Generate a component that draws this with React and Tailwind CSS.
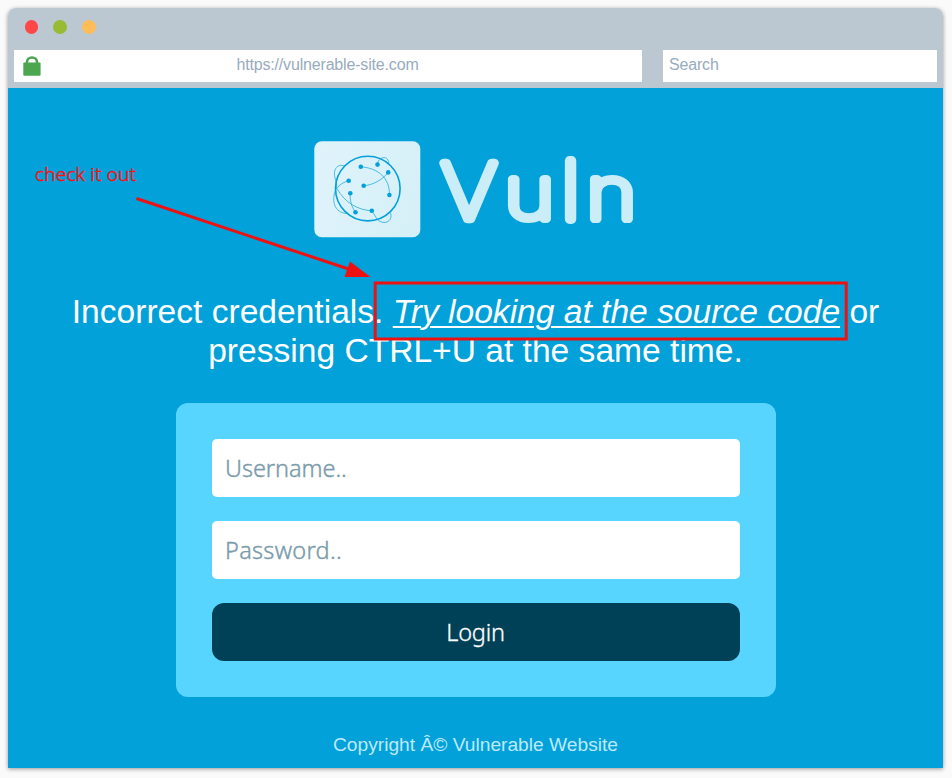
const LETTERS = [
  { char: 'V', x: 469, sx: 1.13, sy: 0.99 },
  { char: 'u', x: 529.5, sx: 1.11, sy: 0.94 },
  { char: 'l', x: 570.5, sx: 1, sy: 1.03 },
  { char: 'n', x: 611.5, sx: 1.11, sy: 0.95 },
];

function Logo() {
  return (
    <svg className="mr-[-13px] block shrink-0" width="336" height="98" viewBox="314 140 336 98" role="img" aria-label="Vuln">
      <defs>
        <linearGradient id="pale" gradientUnits="userSpaceOnUse" x1="314" y1="150" x2="634" y2="230">
          <stop offset="0" stopColor="#e0f3fa" />
          <stop offset="1" stopColor="#c2eaf5" />
        </linearGradient>
      </defs>
      <rect x="314.3" y="141.2" width="106" height="96" rx="7.5" fill="url(#pale)" />
      <g fill="none" stroke="#02a1da">
        <circle cx="367.8" cy="188.6" r="32.3" strokeWidth="1.6" />
        <g strokeWidth="0.9" strokeOpacity="0.75">
          <path d="M360.8 166.8C378 168 390 178 389.4 195" />
          <path d="M388.2 172.5C382 180 373 185 363.7 185.8" />
          <path d="M348.7 180.8C344 182 339 184.5 337 188.5" />
          <path d="M337 188.5C345 203 358 210 371.8 210.8" />
          <path d="M350.3 193.2C349.5 200 352 208 355.5 212.2" />
          <path d="M345 166C336 163 332 171 336 181C337 184 337 186 336 189C331 200 334 213 347 213.5" />
          <path d="M377.5 164.5C378 157 387 155 388.6 161.5L388.8 164" />
          <path d="M371.8 210.8C375 215 376 219 380 221.5C387 225 393 219 390.5 213" />
        </g>
      </g>
      <g fill="#02a1da">
        <circle cx="360.8" cy="166.8" r="2.3" />
        <circle cx="377.5" cy="164.6" r="2.3" />
        <circle cx="388.2" cy="172.4" r="2.3" />
        <circle cx="348.7" cy="180.8" r="2.3" />
        <circle cx="363.7" cy="185.8" r="2.3" />
        <circle cx="350.3" cy="193.2" r="2.3" />
        <circle cx="389.4" cy="195" r="2.3" />
        <circle cx="371.8" cy="210.8" r="2.3" />
        <circle cx="355.5" cy="212.2" r="2.3" />
      </g>
      <g
        fill="#cbedf7"
        stroke="#cbedf7"
        strokeLinejoin="round"
        fontFamily="Inter, sans-serif"
        fontWeight="100"
        fontSize="77"
        textAnchor="middle"
      >
        {LETTERS.map((l) => (
          <text
            key={l.char}
            transform={`translate(${l.x} 219.1) scale(${l.sx} ${l.sy})`}
            strokeWidth={9.6 / l.sx}
          >
            {l.char}
          </text>
        ))}
      </g>
    </svg>
  );
}

function Lock() {
  return (
    <svg className="block" width="18" height="20" viewBox="0 0 18 20">
      <path d="M4 8V6a5 4.500 0 0 1 10 0V8" fill="none" stroke="#4ca650" strokeWidth="2.600" />
      <rect x="0.300" y="6.600" width="17.300" height="13.100" rx="1" fill="#4ca650" />
    </svg>
  );
}

function BrowserBar() {
  return (
    <header className="h-[80px] rounded-t-[8px] bg-[#bbc7d1] px-[6px] pt-[12px] font-['Liberation_Sans',sans-serif] text-[16px] tracking-[-0.17px] text-[#98abbe]">
      <div className="flex h-[14px] gap-[15px] pl-[11px]">
        <span className="h-[14px] w-[13px] rounded-full bg-[#ff4747]" />
        <span className="size-[14px] rounded-full bg-[#99bb33]" />
        <span className="size-[14px] rounded-full bg-[#ffbd59]" />
      </div>
      <div className="mt-[16px] flex h-[32px] gap-[21px]">
        <div className="flex w-[628px] bg-white">
          <div className="w-[42px] pl-[9px] pt-[6px]"><Lock /></div>
          <div className="flex-1 pr-[43px] text-center leading-[29px]">https://vulnerable-site.com</div>
        </div>
        <div className="flex-1 bg-white pl-[6px] leading-[29px]">Search</div>
      </div>
    </header>
  );
}

function Annotation() {
  return (
    <svg className="pointer-events-none absolute left-0 top-0" width="952" height="778" viewBox="0 0 952 778">
      <text x="35" y="181" fill="#fa0f0f" stroke="#fa0f0f" strokeWidth="0.5" fontFamily="'Noto Sans', sans-serif" fontWeight="300" fontSize="19" textLength="101">
        check it out
      </text>
      <path d="M136.500 198.500L350 269.500" stroke="#ee1111" strokeWidth="3" />
      <path d="M350 261.500L370.500 277L344.500 277Z" fill="#ee1111" />
      <rect x="375.200" y="283" width="471" height="56" fill="none" stroke="#ee1111" strokeWidth="3" />
    </svg>
  );
}

export default function App() {
  return (
    <div className="relative h-[778px] w-[952px] overflow-hidden bg-[#fafafa] pl-[8px] pt-[8px]">
      <div className="h-[760px] w-[935px] rounded-t-[8px] shadow-[0_1px_4px_rgba(0,0,0,0.4)]">
        <BrowserBar />
        <main className="flex h-[680px] flex-col items-center bg-[#02a1da] pt-[52px] font-['Liberation_Sans',sans-serif]">
          <Logo />
          <p className="mt-[54px] h-[78px] whitespace-nowrap text-center text-[33.6px] leading-[39px] text-white">
            Incorrect credentials. <em className="underline decoration-2 underline-offset-[3px]">Try looking at the source code</em> or
            <br />
            pressing CTRL+U at the same time.
          </p>
          <form className="mt-[33px] flex h-[294px] w-[600px] flex-col gap-[24px] rounded-[12px] bg-[#57d5ff] p-[36px] font-['Noto_Sans',sans-serif] text-[23.5px] font-light">
            <div className="h-[58px] rounded-[5px] bg-white pl-[13.5px] leading-[59px] tracking-[-0.05px] text-[#7b9baa] [-webkit-text-stroke:0.4px_#7b9baa]">Username..</div>
            <div className="h-[58px] rounded-[5px] bg-white pl-[13.5px] leading-[59px] tracking-[0.3px] text-[#7b9baa] [-webkit-text-stroke:0.4px_#7b9baa]">Password..</div>
            <button type="button" className="h-[58px] rounded-[12px] bg-[#004158] leading-[59px] tracking-[-0.2px] text-white [-webkit-text-stroke:0.3px_white]">Login</button>
          </form>
          <footer className="mt-[36px] text-[19.2px] leading-[24px] text-[#bdeafa]">Copyright Â© Vulnerable Website</footer>
        </main>
      </div>
      <Annotation />
    </div>
  );
}
